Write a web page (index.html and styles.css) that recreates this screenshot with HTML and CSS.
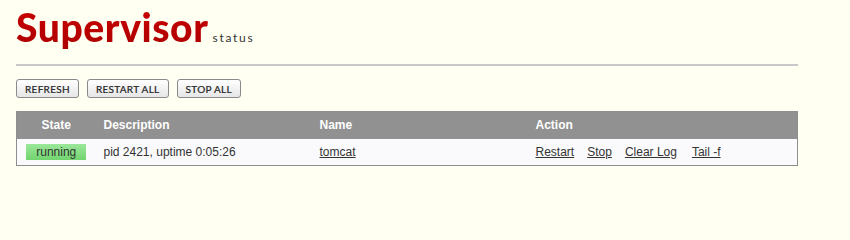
FILE: index.html
```html
<!DOCTYPE html>
<html>
<head>
<meta charset="utf-8">
<title>Supervisor Status</title>
<link rel="stylesheet" href="styles.css">
</head>
<body>
<div class="wrapper">
  <header class="masthead">
    <h1 class="logo">Supervisor</h1>
    <span class="subtitle">status</span>
  </header>
  <div class="rule"></div>
  <ul class="buttons">
    <li><a class="btn" href="#">Refresh</a></li>
    <li><a class="btn" href="#">Restart All</a></li>
    <li><a class="btn" href="#">Stop All</a></li>
  </ul>
  <table class="procs">
    <thead>
      <tr>
        <th class="col-state">State</th>
        <th class="col-desc">Description</th>
        <th class="col-name">Name</th>
        <th class="col-action">Action</th>
      </tr>
    </thead>
    <tbody>
      <tr>
        <td class="col-state"><span class="status running">running</span></td>
        <td class="col-desc">pid 2421, uptime 0:05:26</td>
        <td class="col-name"><a href="#">tomcat</a></td>
        <td class="col-action">
          <ul class="actions">
            <li><a href="#">Restart</a></li>
            <li><a href="#">Stop</a></li>
            <li><a href="#">Clear Log</a></li>
            <li><a href="#">Tail -f</a></li>
          </ul>
        </td>
      </tr>
    </tbody>
  </table>
</div>
</body>
</html>
```
FILE: styles.css
```css
html, body {
  margin: 0;
  padding: 0;
}
body {
  background: #fffff2;
  font-family: "Liberation Sans", Arial, sans-serif;
  font-size: 12px;
  color: #333;
}
.wrapper {
  width: 782px;
  margin-left: 16px;
}
.masthead {
  display: flex;
  align-items: baseline;
  height: 52px;
}
.logo {
  margin: 0;
  font-family: "Lato", sans-serif;
  font-weight: 900;
  font-size: 39px;
  letter-spacing: 0.6px;
  line-height: 54px;
  color: #b80000;
  background: linear-gradient(#d00000, #a80000);
  -webkit-background-clip: text;
  background-clip: text;
  -webkit-text-fill-color: transparent;
}
.subtitle {
  margin-left: 4px;
  font-family: "Lato", sans-serif;
  font-size: 12px;
  letter-spacing: 1.7px;
  color: #333;
}
.rule {
  margin-top: 12px;
  height: 2px;
  background: #c8c8c8;
}
.buttons {
  list-style: none;
  margin: 13px 0 0 0;
  padding: 0;
  display: flex;
  gap: 8px;
}
.btn {
  display: flex;
  align-items: center;
  justify-content: center;
  box-sizing: border-box;
  height: 19px;
  padding: 0 8px;
  border: 1px solid #8a8a8a;
  border-radius: 3px;
  background: linear-gradient(#ffffff, #e6e6e6);
  font-family: "Lato", sans-serif;
  font-weight: 400;
  font-size: 10px;
  letter-spacing: 0.3px;
  text-transform: uppercase;
  color: #222;
  text-decoration: none;
  -webkit-text-stroke: 0.2px #222;
}
.procs {
  margin-top: 13px;
  width: 782px;
  border-collapse: collapse;
  border: 1px solid #8e8e8e;
  table-layout: fixed;
}
.procs th {
  background: #919191;
  color: #fff;
  font-weight: 700;
  font-size: 12px;
  text-align: left;
  height: 27px;
  padding: 0 8px;
  box-sizing: border-box;
}
.procs td {
  background: #fafafc;
  height: 27px;
  padding: 0 8px;
  box-sizing: border-box;
  color: #333;
}
.procs .col-state { width: 79px; text-align: center; padding: 0; }
.procs .col-desc { width: 216px; }
.procs .col-name { width: 216px; }
.procs a {
  color: #333;
  text-decoration: underline;
}
.status {
  display: inline-block;
  width: 60px;
  height: 16px;
  line-height: 16px;
  text-align: center;
  vertical-align: middle;
}
.running {
  background: linear-gradient(#9be79a, #72d46e);
  color: #333;
}
.actions {
  list-style: none;
  margin: 0;
  padding: 0;
  display: flex;
  gap: 13px;
}
.actions li:nth-child(3) { margin-right: 2px; }
```
